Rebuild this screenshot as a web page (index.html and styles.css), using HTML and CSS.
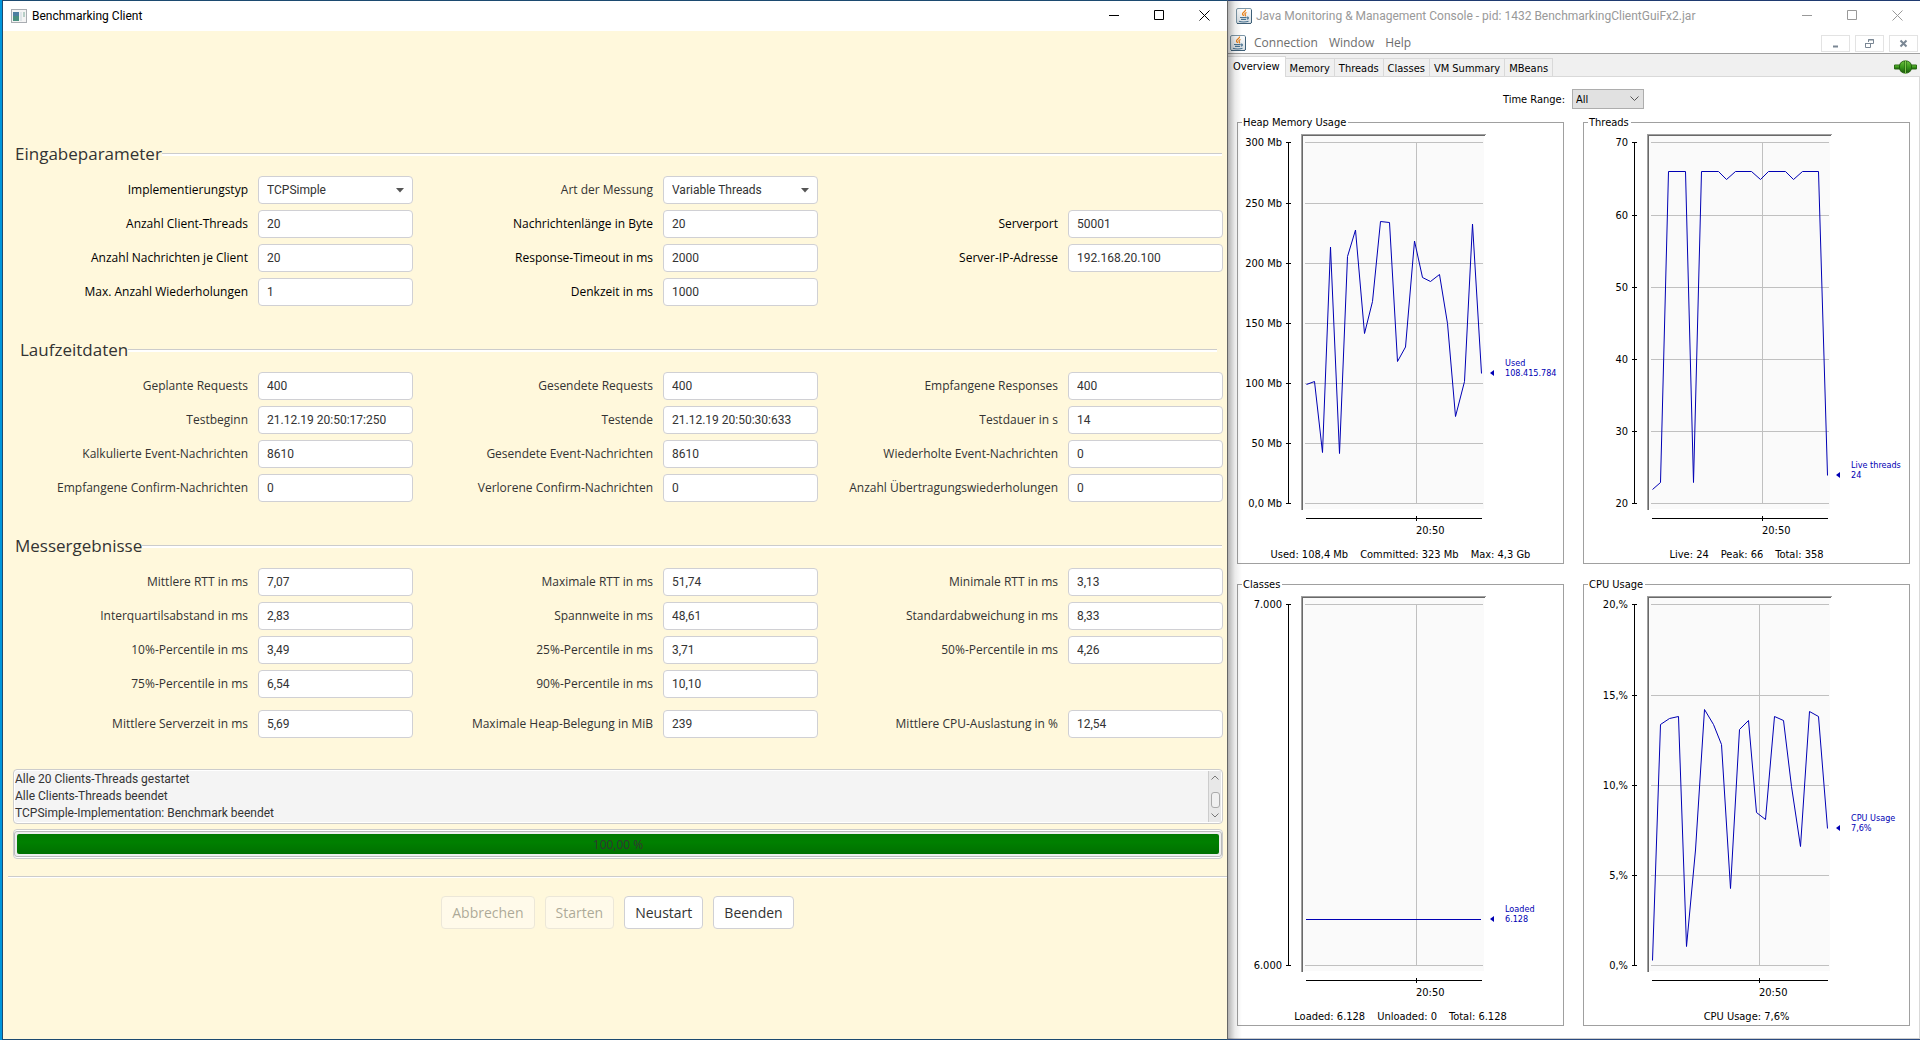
FILE: index.html
```html
<!DOCTYPE html>
<html lang="de">
<head>
<meta charset="utf-8">
<title>Benchmarking Client</title>
<link rel="stylesheet" href="styles.css">
</head>
<body>
<svg width="0" height="0" class="defs" aria-hidden="true">
  <defs>
    <linearGradient id="cupBg" x1="0" y1="0" x2="0" y2="1"><stop offset="0" stop-color="#fff"/><stop offset="1" stop-color="#d5dde3"/></linearGradient>
    <linearGradient id="plugBg" x1="0" y1="0" x2="0" y2="1"><stop offset="0" stop-color="#6abf3c"/><stop offset=".5" stop-color="#3b9a1c"/><stop offset="1" stop-color="#1d5c0c"/></linearGradient>
    <symbol id="java" viewBox="0 0 16 16">
      <rect x=".5" y=".5" width="15" height="15" rx="1.5" fill="url(#cupBg)" stroke="#7d97a8"/>
      <path d="M1 15.5h14M15.5 2v13" stroke="#3f6078" fill="none"/>
      <path d="M9.500 1.500c.8 2-3.500 2.800-3 4.500.2.800 1 1.200 1 2M10.500 4.500c-2 .8-1.800 1.500-1.200 2.100.5.600.2 1.200-.3 1.700" stroke="#e8801a" stroke-width="1.300" fill="none"/>
      <path d="M4 9.500h6.500M5 11.300h5M3 13.300c2 .9 7 .9 9.500 0M10.800 9.300c2.200-.6 2 1.500 0 1.900" stroke="#4a7391" stroke-width="1.200" fill="none"/>
    </symbol>
  </defs>
</svg>
<div class="desktop">
  <main class="window client">
    <header class="titlebar">
      <svg class="app-icon" width="16" height="14" viewBox="0 0 16 14"><rect x=".5" y=".5" width="15" height="13" fill="#f4f4f4" stroke="#a9adb2"/><rect x="2" y="3" width="6" height="9" fill="#4a9080"/><rect x="2" y="3" width="6" height="4" fill="#4d7fa0"/><rect x="9" y="3" width="2" height="9" fill="#dfe5e8"/><rect x="12" y="3" width="2" height="5" fill="#b8d0c8"/></svg>
      <h1>Benchmarking Client</h1>
      <div class="controls">
        <button aria-label="Minimieren"><svg width="11" height="11" viewBox="0 0 11 11"><path d="M0 5.500h10"/></svg></button>
        <button aria-label="Maximieren"><svg width="11" height="11" viewBox="0 0 11 11"><path d="M.5.500h9v9h-9z"/></svg></button>
        <button aria-label="Schließen"><svg width="11" height="11" viewBox="0 0 11 11"><path d="M.5.500l10 10M10.500.500l-10 10"/></svg></button>
      </div>
    </header>
    <form class="body">
      <section>
        <h2>Eingabeparameter</h2>
        <div class="fields strong">
          <label for="impl">Implementierungstyp</label><select id="impl"><option>TCPSimple</option></select>
          <label for="art" class="soft">Art der Messung</label><select id="art"><option>Variable Threads</option></select>
          <label class="row-start" for="ct">Anzahl Client-Threads</label><input id="ct" value="20">
          <label for="nl">Nachrichtenlänge in Byte</label><input id="nl" value="20">
          <label for="sp">Serverport</label><input id="sp" value="50001">
          <label for="nc">Anzahl Nachrichten je Client</label><input id="nc" value="20">
          <label for="rt">Response-Timeout in ms</label><input id="rt" value="2000">
          <label for="ip">Server-IP-Adresse</label><input id="ip" value="192.168.20.100">
          <label for="mw">Max. Anzahl Wiederholungen</label><input id="mw" value="1">
          <label for="dz">Denkzeit in ms</label><input id="dz" value="1000">
        </div>
      </section>
      <section>
        <h2 class="indented">Laufzeitdaten</h2>
        <div class="fields">
          <label for="gp">Geplante Requests</label><input id="gp" value="400" readonly>
          <label for="gs">Gesendete Requests</label><input id="gs" value="400" readonly>
          <label for="er">Empfangene Responses</label><input id="er" value="400" readonly>
          <label for="tb">Testbeginn</label><input id="tb" value="21.12.19 20:50:17:250" readonly>
          <label for="te">Testende</label><input id="te" value="21.12.19 20:50:30:633" readonly>
          <label for="td">Testdauer in s</label><input id="td" value="14" readonly>
          <label for="ke">Kalkulierte Event-Nachrichten</label><input id="ke" value="8610" readonly>
          <label for="ge">Gesendete Event-Nachrichten</label><input id="ge" value="8610" readonly>
          <label for="we">Wiederholte Event-Nachrichten</label><input id="we" value="0" readonly>
          <label for="ec">Empfangene Confirm-Nachrichten</label><input id="ec" value="0" readonly>
          <label for="vc">Verlorene Confirm-Nachrichten</label><input id="vc" value="0" readonly>
          <label for="au">Anzahl Übertragungswiederholungen</label><input id="au" value="0" readonly>
        </div>
      </section>
      <section>
        <h2>Messergebnisse</h2>
        <div class="fields">
          <label for="r1">Mittlere RTT in ms</label><input id="r1" value="7,07" readonly>
          <label for="r2">Maximale RTT in ms</label><input id="r2" value="51,74" readonly>
          <label for="r3">Minimale RTT in ms</label><input id="r3" value="3,13" readonly>
          <label for="r4">Interquartilsabstand in ms</label><input id="r4" value="2,83" readonly>
          <label for="r5">Spannweite in ms</label><input id="r5" value="48,61" readonly>
          <label for="r6">Standardabweichung in ms</label><input id="r6" value="8,33" readonly>
          <label for="r7">10%-Percentile in ms</label><input id="r7" value="3,49" readonly>
          <label for="r8">25%-Percentile in ms</label><input id="r8" value="3,71" readonly>
          <label for="r9">50%-Percentile in ms</label><input id="r9" value="4,26" readonly>
          <label for="r10">75%-Percentile in ms</label><input id="r10" value="6,54" readonly>
          <label for="r11">90%-Percentile in ms</label><input id="r11" value="10,10" readonly>
        </div>
        <div class="fields totals">
          <label for="r12">Mittlere Serverzeit in ms</label><input id="r12" value="5,69" readonly>
          <label for="r13">Maximale Heap-Belegung in MiB</label><input id="r13" value="239" readonly>
          <label for="r14">Mittlere CPU-Auslastung in %</label><input id="r14" value="12,54" readonly>
        </div>
      </section>
      <div class="log">
        <ul>
          <li>Alle 20 Clients-Threads gestartet</li>
          <li>Alle Clients-Threads beendet</li>
          <li>TCPSimple-Implementation: Benchmark beendet</li>
        </ul>
        <div class="scrollbar" aria-hidden="true">
          <svg width="8" height="5" viewBox="0 0 8 5"><path d="M.5 4.500L4 1l3.500 3.500"/></svg>
          <span class="thumb"></span>
          <svg width="8" height="5" viewBox="0 0 8 5"><path d="M.5.500L4 4l3.500-3.500"/></svg>
        </div>
      </div>
      <div class="progress">
        <progress max="100" value="100" aria-label="Fortschritt"></progress>
        <span>100,00 %</span>
      </div>
      <div class="actions">
        <button type="button" disabled>Abbrechen</button>
        <button type="button" disabled>Starten</button>
        <button type="button">Neustart</button>
        <button type="button">Beenden</button>
      </div>
    </form>
  </main>

  <aside class="window console">
    <header class="titlebar">
      <svg class="java-icon" width="16" height="16"><use href="#java"/></svg>
      <h1>Java Monitoring &amp; Management Console - pid: 1432 BenchmarkingClientGuiFx2.jar</h1>
      <div class="controls">
        <button aria-label="Minimize"><svg width="11" height="11" viewBox="0 0 11 11"><path d="M0 5.500h10"/></svg></button>
        <button aria-label="Maximize"><svg width="11" height="11" viewBox="0 0 11 11"><path d="M.5.500h9v9h-9z"/></svg></button>
        <button aria-label="Close"><svg width="11" height="11" viewBox="0 0 11 11"><path d="M.5.500l10 10M10.500.500l-10 10"/></svg></button>
      </div>
    </header>
    <div class="menubar">
      <svg class="java-icon" width="16" height="16"><use href="#java"/></svg>
      <nav><a href="#connection">Connection</a><a href="#window">Window</a><a href="#help">Help</a></nav>
      <div class="frame-controls">
        <button aria-label="Minimize frame"><svg width="9" height="9" viewBox="0 0 9 9"><path d="M2 7.500h5" stroke-width="2"/></svg></button>
        <button aria-label="Restore frame"><svg width="9" height="9" viewBox="0 0 9 9"><path d="M3.500 3V.500h5v4H6M3 1h6M.5 4.500h5v4h-5zM0 4.500h6"/></svg></button>
        <button aria-label="Close frame"><svg width="9" height="9" viewBox="0 0 9 9"><path d="M1.500 1.500l6 6M7.500 1.500l-6 6" stroke-width="2"/></svg></button>
      </div>
    </div>
    <div class="tabs">
      <button class="active">Overview</button><button>Memory</button><button>Threads</button><button>Classes</button><button>VM Summary</button><button>MBeans</button>
      <svg class="plug" width="23" height="14" viewBox="0 0 23 14"><path d="M.5 5h6v4h-6zM16.500 5h6v4h-6z" fill="url(#plugBg)" stroke="#2a6d14"/><path d="M11 1C7 1 5.500 4 5.500 7S7 13 11 13zM12 1c4 0 5.500 3 5.500 6s-1.500 6-5.500 6z" fill="url(#plugBg)" stroke="#1f5c0c"/><path d="M11.500 0v14" stroke="#7cc44e"/></svg>
    </div>
    <div class="overview">
      <div class="range"><label for="range">Time Range:</label><select id="range"><option>All</option></select></div>
      <div class="charts">
        <fieldset>
          <legend>Heap Memory Usage</legend>
          <svg class="chart" viewBox="1 8 325 417">
            <path class="plot" d="M66 13h181v374H66z"/><path class="bevel" d="M65.500 388V13M64 13.500h184"/><path class="bevel light" d="M64.500 388V12M64 12.500h185"/>
            <path class="gridline" d="M68 20.500h178M68 81.500h178M68 141.500h178M68 201.500h178M68 261.500h178M68 321.500h178M68 381.500h178M179.500 20v361"/>
            <path class="axis" d="M51.500 20v362M49 20.500h5M49 81.500h5M49 141.500h5M49 201.500h5M49 261.500h5M49 321.500h5M49 381.500h5M69 396.500h176M179.500 394v5"/>
            <g class="ticks"><text x="45" y="24">300 Mb</text><text x="45" y="85">250 Mb</text><text x="45" y="145">200 Mb</text><text x="45" y="205">150 Mb</text><text x="45" y="265">100 Mb</text><text x="45" y="325">50 Mb</text><text x="45" y="385">0,0 Mb</text></g>
            <text x="179" y="412">20:50</text>
            <polyline class="series" points="69.5,262.5 77.5,259.5 85.5,330.5 93.5,125 102.5,331.5 110.5,134.5 118.5,108 127.5,211.5 135.5,179.5 143.5,99.5 152.5,100.5 160.5,239.5 168.5,225 177.5,119 185.5,155.5 193.5,159.5 202.5,152.5 210.5,201.5 218.5,294.5 227.5,259.5 235.5,102 244.5,251.5"/>
            <path class="marker" d="M253 251l4-3v6z"/>
            <g class="value"><text x="268" y="244">Used</text><text x="268" y="254">108.415.784</text></g>
          </svg>
          <p><span>Used: 108,4 Mb</span><span>Committed: 323 Mb</span><span>Max: 4,3 Gb</span></p>
        </fieldset>
        <fieldset>
          <legend>Threads</legend>
          <svg class="chart" viewBox="1 8 325 417">
            <path class="plot" d="M66 13h181v374H66z"/><path class="bevel" d="M65.500 388V13M64 13.500h184"/><path class="bevel light" d="M64.500 388V12M64 12.500h185"/>
            <path class="gridline" d="M68 20.500h178M68 93.500h178M68 165.500h178M68 237.500h178M68 309.500h178M68 381.500h178M179.500 20v361"/>
            <path class="axis" d="M51.500 20v362M49 20.500h5M49 93.500h5M49 165.500h5M49 237.500h5M49 309.500h5M49 381.500h5M69 396.500h176M179.500 394v5"/>
            <g class="ticks"><text x="45" y="24">70</text><text x="45" y="97">60</text><text x="45" y="169">50</text><text x="45" y="241">40</text><text x="45" y="313">30</text><text x="45" y="385">20</text></g>
            <text x="179" y="412">20:50</text>
            <polyline class="series" points="69.5,367.5 77.5,360.5 85.5,49.5 102.5,49.5 110.5,360.5 118.5,49.5 135.5,49.5 143.5,57.5 152.5,49.5 168.5,49.5 177.5,57.5 185.5,49.5 202.5,49.5 210.5,57.5 219.5,49.5 235.5,49.5 244.5,353.5"/>
            <path class="marker" d="M253 353l4-3v6z"/>
            <g class="value"><text x="268" y="346">Live threads</text><text x="268" y="356">24</text></g>
          </svg>
          <p><span>Live: 24</span><span>Peak: 66</span><span>Total: 358</span></p>
        </fieldset>
        <fieldset>
          <legend>Classes</legend>
          <svg class="chart" viewBox="1 8 325 417">
            <path class="plot" d="M66 13h181v374H66z"/><path class="bevel" d="M65.500 388V13M64 13.500h184"/><path class="bevel light" d="M64.500 388V12M64 12.500h185"/>
            <path class="gridline" d="M68 20.500h178M68 381.500h178M179.500 20v361"/>
            <path class="axis" d="M51.500 20v362M49 20.500h5M49 381.500h5M69 396.500h176M179.500 394v5"/>
            <g class="ticks"><text x="45" y="24">7.000</text><text x="45" y="385">6.000</text></g>
            <text x="179" y="412">20:50</text>
            <polyline class="series" points="69,335.5 244,335.5"/>
            <path class="marker" d="M253 335l4-3v6z"/>
            <g class="value"><text x="268" y="328">Loaded</text><text x="268" y="338">6.128</text></g>
          </svg>
          <p><span>Loaded: 6.128</span><span>Unloaded: 0</span><span>Total: 6.128</span></p>
        </fieldset>
        <fieldset>
          <legend>CPU Usage</legend>
          <svg class="chart" viewBox="1 8 325 417">
            <path class="plot" d="M66 13h181v374H66z"/><path class="bevel" d="M65.500 388V13M64 13.500h184"/><path class="bevel light" d="M64.500 388V12M64 12.500h185"/>
            <path class="gridline" d="M68 20.500h178M68 111.500h178M68 201.500h178M68 291.500h178M68 381.500h178M176.500 20v361"/>
            <path class="axis" d="M51.500 20v362M49 20.500h5M49 111.500h5M49 201.500h5M49 291.500h5M49 381.500h5M69 396.500h176M176.500 394v5"/>
            <g class="ticks"><text x="45" y="24">20,%</text><text x="45" y="115">15,%</text><text x="45" y="205">10,%</text><text x="45" y="295">5,%</text><text x="45" y="385">0,%</text></g>
            <text x="176" y="412">20:50</text>
            <polyline class="series" points="69.5,376.5 77.5,140.5 86.5,134.5 95.5,132.5 103.5,362.5 112.5,266 121.5,125.5 130.5,140.5 138.5,160.5 147.5,304.5 156.5,145.5 165.5,136.5 173.5,228.5 182.5,235.5 191.5,132.5 200.5,136.5 208.5,202.5 217.5,262.5 226.5,127.5 235.5,132.5 244.5,244.5"/>
            <path class="marker" d="M253 244l4-3v6z"/>
            <g class="value"><text x="268" y="237">CPU Usage</text><text x="268" y="247">7,6%</text></g>
          </svg>
          <p><span>CPU Usage: 7,6%</span></p>
        </fieldset>
      </div>
    </div>
  </aside>
</div>
</body>
</html>
```
FILE: styles.css
```css
* { box-sizing: border-box; }
body { margin: 0; background: #0096dc; font: 12px/16px "Open Sans", "Noto Sans", sans-serif; }
h1, h2, p, ul { margin: 0; padding: 0; font-weight: 400; }
button, input, select { font: inherit; color: inherit; margin: 0; }
button { background: none; border: 0; padding: 0; }
svg { display: block; }
.defs { position: absolute; }

.desktop {
  display: grid;
  grid-template-columns: 1226fr 692fr;
  min-height: 100vh;
  padding-left: 2px;
}
.window { display: flex; flex-direction: column; min-width: 0; }

.titlebar { display: flex; align-items: center; height: 30px; background: #fff; }
.titlebar h1 { font: 12px/16px Roboto, sans-serif; white-space: nowrap; }
.controls { display: flex; margin-left: auto; }
.controls button { display: flex; align-items: center; justify-content: center; width: 45px; height: 30px; padding-bottom: 2px; }
.controls path { fill: none; stroke: currentColor; }

/* Benchmark client */
.client {
  background: #fff8dc;
  border: 1px solid #1c4a70;
  border-right-color: #666;
  color: #333;
}
.client .titlebar { padding-left: 8px; color: #000; }
.app-icon { margin-right: 5px; }
.body { padding: 111px 4px 0 5px; }
section { margin-bottom: 32px; }
h2 {
  display: flex;
  align-items: center;
  margin: 0 1px 10px 7px;
  font-size: 17px;
  line-height: 24px;
}
h2::after { content: ""; flex: 1; height: 2px; border-top: 1px solid #ccc; background: #fff; }
h2.indented { margin-left: 12px; margin-right: 6px; }
.fields {
  display: grid;
  grid-template-columns: repeat(3, minmax(0, 1fr) 155px);
  gap: 6px 10px;
  align-items: center;
  padding-left: 10px;
}
.fields.totals { margin-top: 12px; }
.fields label { text-align: right; font-size: 12px; white-space: nowrap; }
.fields .row-start { grid-column-start: 1; }
.strong label { color: #000; }
.strong .soft { color: #333; }
.fields input, .fields select {
  width: 100%;
  height: 28px;
  padding: 0 8px;
  border: 1px solid #d0d0d4;
  border-radius: 4px;
  background: #fff;
  font: 12px/16px Roboto, sans-serif;
}
select { appearance: none; }
.fields select {
  background: #fff url("data:image/svg+xml,%3Csvg xmlns='http://www.w3.org/2000/svg' width='8' height='5'%3E%3Cpath d='M0 0h8L4 4.500z' fill='%23555'/%3E%3C/svg%3E") no-repeat right 8px center;
}
.log {
  display: flex;
  height: 55px;
  margin: -1px 0 5px 5px;
  border: 1px solid #ccc;
  border-radius: 4px;
  background: #f4f4f4;
  box-shadow: inset 0 0 0 1px #fff;
}
.log ul { flex: 1; padding: 1px; list-style: none; font: 12px/17px Roboto, sans-serif; }
.scrollbar {
  display: flex;
  flex-direction: column;
  align-items: center;
  width: 13px;
  margin: 1px;
  padding: 4px 1px;
  border-left: 1px solid #ccc;
  background: #e8e8e8;
}
.scrollbar path { fill: none; stroke: #777; }
.thumb { width: 9px; height: 16px; margin: auto 0 5px; border: 1px solid #aaa; border-radius: 3px; background: #f0f0f0; }
.progress {
  position: relative;
  height: 30px;
  margin-left: 5px;
  padding: 1px 0;
  border: 1px solid #ccc;
  border-radius: 4px;
  background: #fff;
}
progress {
  display: block;
  width: 100%;
  height: 26px;
  padding: 2px;
  border: 1px solid #bbb;
  border-radius: 3px;
  background: #eee;
  appearance: none;
}
progress::-webkit-progress-bar { background: #eee; }
progress::-webkit-progress-value { background: linear-gradient(#007800, #008000 40%, #007000); border-radius: 2px; }
.progress span { position: absolute; inset: 0; text-align: center; font-size: 12px; line-height: 30px; }
.actions {
  display: flex;
  justify-content: center;
  gap: 10px;
  margin: 17px -4px 0 0;
  padding-top: 19px;
  border-top: 1px solid #ccc;
  box-shadow: inset 0 1px #fff;
}
.actions button {
  height: 33px;
  padding: 0 10px;
  border: 1px solid #d0d0d4;
  border-radius: 4px;
  background: #fff;
  font-size: 14px;
}
.actions button:disabled { opacity: .4; }

/* JConsole */
.console {
  position: relative;
  border-top: 1px solid #1f3a70;
  border-bottom: 1px solid #2a4a80;
  background: #fff;
  color: #000;
  font: 11px/15px "DejaVu Sans Condensed", "DejaVu Sans", sans-serif;
}
.console::before {
  content: "";
  position: absolute;
  inset: 0 auto 0 0;
  width: 14px;
  background: linear-gradient(to right, rgba(0, 0, 0, .3), rgba(0, 0, 0, .08) 50%, transparent);
  pointer-events: none;
}
.console .titlebar { padding-left: 8px; color: #999; }
.java-icon { margin-right: 4px; }
.menubar {
  display: flex;
  align-items: center;
  height: 23px;
  padding: 2px 2px 0;
  border-bottom: 1px solid #a0a0a0;
  color: #6d6d6d;
  font: 12px/16px "Open Sans", sans-serif;
}
.menubar .java-icon { margin-right: 8px; }
.menubar nav { display: flex; gap: 11px; }
.menubar a { color: inherit; text-decoration: none; }
.frame-controls { display: flex; gap: 5px; margin-left: auto; }
.frame-controls button { display: flex; align-items: center; justify-content: center; width: 29px; height: 17px; border: 1px solid #e3e3e3; }
.frame-controls path { fill: none; stroke: #7a8794; }
.tabs {
  display: flex;
  align-items: flex-end;
  height: 23px;
  padding-right: 3px;
  background: #f0f0f0;
  box-shadow: inset 0 -1px #d9d9d9;
}
.tabs button { height: 19px; padding: 1px 4px 0; border: 1px solid #d9d9d9; border-left: 0; }
.tabs .active { height: 21px; padding: 0 5px 2px; border-bottom: 0; background: #fff; }
.plug { margin: 0 0 3px auto; }
.overview {
  flex: 1;
  padding: 12px 9px 0;
  border-right: 1px solid #d9d9d9;
  border-bottom: 1px solid #ccc;
}
.range { display: flex; align-items: center; justify-content: center; gap: 7px; margin-bottom: 6px; }
.range select {
  width: 72px;
  height: 20px;
  padding: 0 3px;
  border: 1px solid #adadad;
  border-radius: 0;
  background: #e1e1e1 url("data:image/svg+xml,%3Csvg xmlns='http://www.w3.org/2000/svg' width='9' height='6'%3E%3Cpath d='M.5.500l4 4 4-4' fill='none' stroke='%23555'/%3E%3C/svg%3E") no-repeat right 4px center;
}
.charts { display: grid; grid-template-columns: 1fr 1fr; gap: 13px 19px; }
fieldset { min-width: 0; margin: 0; padding: 0; border: 1px solid #a0a0a0; }
legend { margin-left: 4px; padding: 0 2px 0 1px; line-height: 15px; }
.chart { width: 100%; font-size: 11px; }
.chart .plot { fill: #fafafa; }
.chart path { fill: none; }
.bevel { stroke: #696969; }
.bevel.light { stroke: #a0a0a0; }
.gridline { stroke: #c0c0c0; }
.axis { stroke: #000; }
.series { fill: none; stroke: #0000b4; }
.chart .marker { fill: #0000b4; }
.ticks { text-anchor: end; }
.value { fill: #0000b4; font-size: 9px; }
fieldset p { display: flex; justify-content: center; gap: 12px; line-height: 16px; }
```
